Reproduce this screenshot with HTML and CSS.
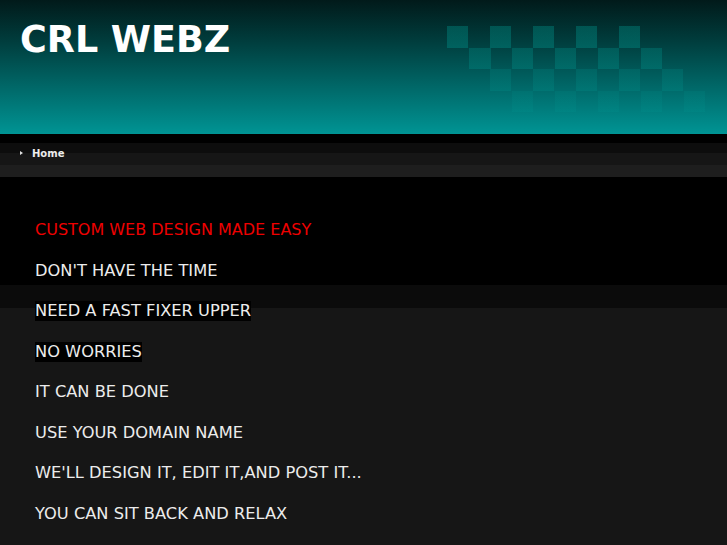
FILE: index.html
```html
<!DOCTYPE html>
<html>
<head>
<meta charset="utf-8">
<title>CRL WEBZ</title>
<link rel="stylesheet" href="styles.css">
</head>
<body>
<header class="header">
  <h1 class="logo">CRL WEBZ</h1>
  <div class="checker">
    <div class="row row1"></div>
    <div class="row row2"></div>
    <div class="row row3"></div>
    <div class="row row4"></div>
  </div>
</header>
<nav class="nav">
  <ul class="menu">
    <li class="menu-item"><span class="bullet"></span><a class="menu-link" href="#">Home</a></li>
  </ul>
</nav>
<main class="main">
  <p class="line red">CUSTOM WEB DESIGN MADE EASY</p>
  <p class="line">DON'T HAVE THE TIME</p>
  <p class="line"><span class="hl">NEED A FAST FIXER UPPER</span></p>
  <p class="line"><span class="hl">NO WORRIES</span></p>
  <p class="line">IT CAN BE DONE</p>
  <p class="line">USE YOUR DOMAIN NAME</p>
  <p class="line">WE'LL DESIGN IT, EDIT IT,AND POST IT...</p>
  <p class="line">YOU CAN SIT BACK AND RELAX</p>
</main>
</body>
</html>
```
FILE: styles.css
```css
html {
  background: #161616;
}
body {
  margin: 0;
  font-family: "DejaVu Sans", Verdana, sans-serif;
  color: #ececec;
}
.header {
  height: 134px;
  box-sizing: border-box;
  background: linear-gradient(#011a1a 0%, #003c3c 30%, #006464 62%, #009494 100%);
  display: flex;
  align-items: flex-start;
  padding: 18px 0 0 20px;
}
.logo {
  margin: 0;
  font-size: 36.5px;
  font-weight: bold;
  color: #ffffff;
  line-height: normal;
  flex: 0 0 auto;
}
.checker {
  margin-left: auto;
  margin-right: 22px;
  margin-top: 8px;
  width: 258px;
  display: flex;
  flex-direction: column;
}
.row {
  width: 193.5px;
  height: 21.5px;
}
.row1 {
  background: repeating-linear-gradient(90deg, rgba(0, 170, 160, 0.3) 0 21.5px, transparent 21.5px 43px);
}
.row2 {
  margin-left: 21.5px;
  background: repeating-linear-gradient(90deg, rgba(0, 170, 160, 0.24) 0 21.5px, transparent 21.5px 43px);
}
.row3 {
  margin-left: 43px;
  background: repeating-linear-gradient(90deg, rgba(0, 170, 160, 0.16) 0 21.5px, transparent 21.5px 43px);
}
.row4 {
  margin-left: 64.5px;
  background: repeating-linear-gradient(90deg, rgba(0, 170, 160, 0.1) 0 21.5px, transparent 21.5px 43px);
}
.nav {
  height: 43px;
  background: linear-gradient(#000000 0 9px, #0d0d0d 9px 19px, #161616 19px 31px, #1e1e1e 31px 43px);
}
.menu {
  list-style: none;
  margin: 0;
  padding: 12px 0 0 20px;
  display: flex;
}
.menu-item {
  display: flex;
  align-items: center;
  height: 14px;
}
.bullet {
  width: 0;
  height: 0;
  border-top: 2.5px solid transparent;
  border-bottom: 2.5px solid transparent;
  border-left: 3px solid #e0e0e0;
  margin-right: 9px;
}
.menu-link {
  font-size: 10px;
  font-weight: bold;
  color: #ececec;
  text-decoration: none;
}
.main {
  height: 368px;
  box-sizing: border-box;
  padding: 33px 0 0 35px;
  background: linear-gradient(#000000 0 108px, #0b0b0b 108px 131px, #161616 131px);
}
.line {
  margin: 0;
  font-size: 16.25px;
  line-height: 40.5px;
  color: #ececec;
}
.red {
  font-size: 16px;
  color: #ee0000;
}
.hl {
  display: inline-block;
  line-height: 20px;
  background: #000000;
}
```
